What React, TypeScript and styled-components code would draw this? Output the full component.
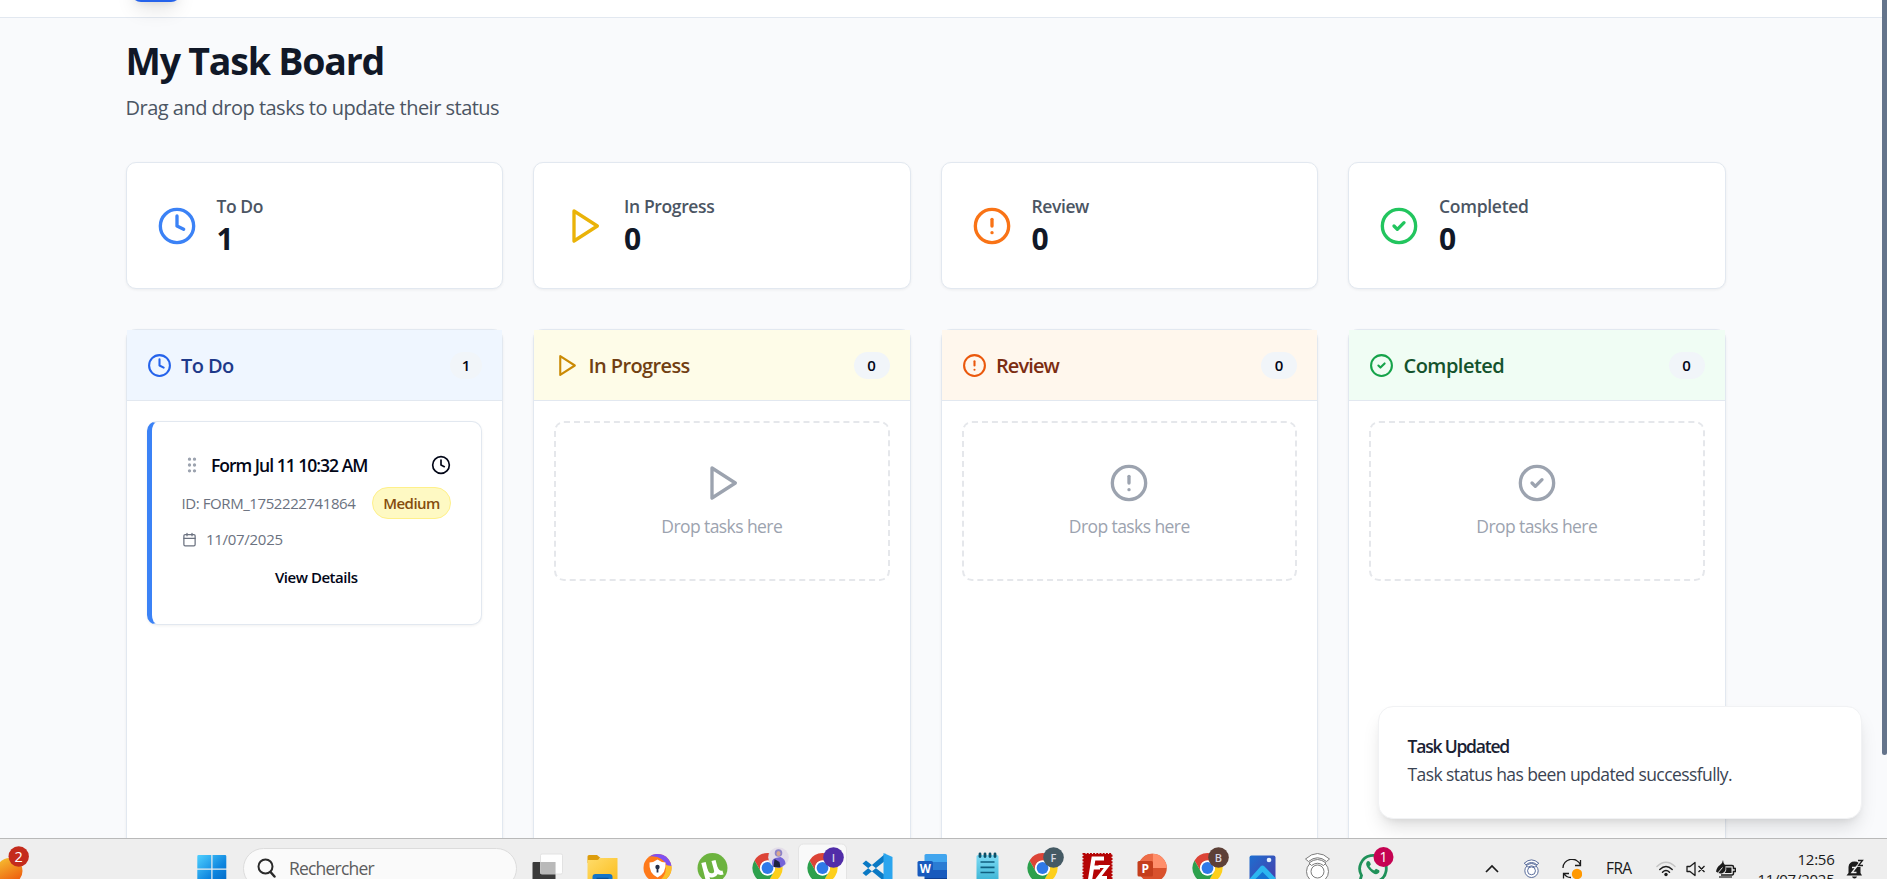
import React from "react";
import styled, { createGlobalStyle } from "styled-components";

const GlobalStyle = createGlobalStyle`
  *, *::before, *::after { box-sizing: border-box; }
  body { margin: 0; overflow: hidden; font-family: "Open Sans", "Noto Sans", sans-serif; color: #020617; }
  h1, h2, h3, p { margin: 0; }
  svg { display: block; flex: none; }
`;

/* ---------- page ---------- */

const Screen = styled.div`
  position: relative;
  display: flex;
  flex-direction: column;
  height: 879px;
  overflow: hidden;
  background: #f9fafc;
`;

const Viewport = styled.div`
  position: relative;
  flex: 0 0 838px;
  overflow: hidden;
`;

const TopBar = styled.header`
  position: relative;
  z-index: 1;
  display: flex;
  align-items: flex-end;
  height: 18px;
  padding: 0 0 15px 130.5px;
  background: #fff;
  border-bottom: 1px solid #e2e8f0;
`;

const LogoTile = styled.div`
  width: 50px;
  height: 50px;
  border-radius: 10px;
  background: #2563eb;
  box-shadow: 0 12px 19px -4px rgba(0, 0, 0, 0.1), 0 5px 8px -5px rgba(0, 0, 0, 0.1);
`;

const ScrollThumb = styled.div`
  position: absolute;
  z-index: 2;
  top: 0;
  right: 0;
  width: 5px;
  height: 755px;
  background: #64748b;
  border-radius: 0 0 3px 3px;
`;

const Main = styled.main`
  width: 1600px;
  margin-left: 125.5px;
  padding-top: 20px;
`;

const PageTitle = styled.h1`
  font-size: 37.5px;
  line-height: 46px;
  font-weight: 700;
  letter-spacing: -1.2px;
  color: #111827;
`;

const Subtitle = styled.p`
  margin: 9px 0 39px 0;
  font-size: 20px;
  line-height: 30px;
  letter-spacing: -0.51px;
  color: #4b5563;
`;

const FourColumns = styled.div`
  display: grid;
  grid-template-columns: repeat(4, 1fr);
  gap: 30px;
`;

/* ---------- stat cards ---------- */

const StatCard = styled.section`
  display: flex;
  align-items: center;
  gap: 20px;
  height: 127px;
  margin-bottom: 40px;
  padding: 0 30px;
  background: #fff;
  border: 1px solid #e2e8f0;
  border-radius: 10px;
  box-shadow: 0 1px 3px rgba(0, 0, 0, 0.06);
`;

const StatText = styled.div`
  padding-top: 2px;
`;

const StatLabel = styled.p<{ $track: number }>`
  font-size: 17.5px;
  line-height: 25px;
  font-weight: 550;
  letter-spacing: ${(p) => p.$track}px;
  color: #4b5563;
`;

const StatValue = styled.p`
  font-size: 30px;
  line-height: 40px;
  font-weight: 700;
  color: #111827;
`;

/* ---------- board columns ---------- */

const Column = styled.section`
  height: 700px;
  background: #fff;
  border: 1px solid #e2e8f0;
  border-radius: 10px;
  box-shadow: 0 1px 3px rgba(0, 0, 0, 0.06);
`;

const ColumnHeader = styled.header<{ $tint: string }>`
  display: flex;
  align-items: center;
  gap: 9.5px;
  height: 71px;
  padding: 0 20px;
  background: ${(p) => p.$tint};
  border-bottom: 1px solid #e2e8f0;
`;

const ColumnTitle = styled.h2<{ $color: string; $track: number }>`
  flex: 1;
  padding-top: 2px;
  font-size: 20px;
  line-height: 30px;
  font-weight: 600;
  letter-spacing: ${(p) => p.$track}px;
  color: ${(p) => p.$color};
`;

const CountBadge = styled.span<{ $narrow: boolean }>`
  width: ${(p) => (p.$narrow ? 32 : 36)}px;
  height: 27px;
  border-radius: 14px;
  background: #f1f5f9;
  font-size: 15px;
  line-height: 27px;
  font-weight: 550;
  text-align: center;
`;

const ColumnBody = styled.div`
  padding: 20px;
`;

const DropZone = styled.div`
  display: flex;
  flex-direction: column;
  align-items: center;
  justify-content: center;
  gap: 11px;
  height: 160px;
  border: 2px dashed #e5e7eb;
  border-radius: 10px;
  color: #9ca3af;
  font-size: 17.5px;
  line-height: 25px;
  letter-spacing: -0.58px;
`;

/* ---------- task card ---------- */

const TaskCard = styled.article`
  display: flex;
  flex-direction: column;
  height: 204px;
  padding: 30px 30px 29px;
  background: #fff;
  border: 1px solid #e2e8f0;
  border-left: 5px solid #3b82f6;
  border-radius: 10px;
  box-shadow: 0 1px 3px rgba(0, 0, 0, 0.06);
`;

const TaskHead = styled.div`
  display: flex;
  align-items: center;
  height: 26px;
`;

const TaskTitle = styled.h3`
  flex: 1;
  margin-left: 9.5px;
  font-size: 17.5px;
  line-height: 26px;
  font-weight: 600;
  letter-spacing: -0.99px;
  white-space: nowrap;
`;

const TaskMeta = styled.div`
  display: flex;
  align-items: center;
  justify-content: space-between;
  height: 32px;
  margin-top: 9px;
  font-size: 15px;
  letter-spacing: -0.42px;
  white-space: nowrap;
  color: #6b7280;
`;

const Priority = styled.span`
  width: 79px;
  height: 32px;
  border: 1px solid #fef08a;
  border-radius: 16px;
  background: #fef9c3;
  color: #854d0e;
  font-weight: 600;
  line-height: 30px;
  text-align: center;
  letter-spacing: -0.56px;
`;

const TaskDate = styled.div`
  display: flex;
  align-items: center;
  gap: 9.5px;
  height: 20px;
  margin-top: 10px;
  font-size: 15px;
  letter-spacing: -0.29px;
  color: #6b7280;
`;

const DetailsButton = styled.button`
  height: 35px;
  margin-top: auto;
  padding: 0;
  border: 0;
  background: transparent;
  font: 600 15px/35px "Open Sans", "Noto Sans", sans-serif;
  letter-spacing: -0.48px;
  color: #020617;
`;

/* ---------- toast ---------- */

const Toast = styled.aside`
  position: absolute;
  z-index: 1;
  right: 25.500px;
  bottom: 19px;
  display: flex;
  flex-direction: column;
  justify-content: center;
  width: 484px;
  height: 113px;
  padding: 0 29px;
  background: #fff;
  border: 1px solid #f1f2f4;
  border-radius: 15px;
  box-shadow: 0 12px 19px -4px rgba(0, 0, 0, 0.13), 0 5px 8px -5px rgba(0, 0, 0, 0.1);
`;

const ToastTitle = styled.p`
  font-size: 17.5px;
  line-height: 28px;
  font-weight: 600;
  letter-spacing: -1.2px;
  color: #1a2233;
`;

const ToastText = styled.p`
  margin-bottom: 6px;
  font-size: 17.5px;
  line-height: 28px;
  letter-spacing: -0.58px;
  color: #3b4453;
`;

/* ---------- taskbar ---------- */

const Taskbar = styled.footer`
  flex: none;
  display: flex;
  align-items: center;
  height: 60px;
  background: #eee;
  border-top: 1px solid #b9b9b9;
  color: #1b1b1b;
`;

const StartButton = styled.div`
  margin-left: 166.5px;
`;

const SearchBox = styled.div`
  display: flex;
  align-items: center;
  gap: 13px;
  width: 274px;
  height: 41px;
  margin: 0 3px 0 16.5px;
  padding: 0 0 1px 13px;
  border: 1px solid #dcdcdc;
  border-radius: 21px;
  background: #fafafa;
  color: #5d5d5d;
  font-size: 17.5px;
  letter-spacing: -0.8px;
`;

const Tray = styled.div`
  display: flex;
  align-items: center;
  margin-left: 84.5px;
`;

const TrayItem = styled.div<{ $before: number }>`
  margin-left: ${(p) => p.$before}px;
`;

const Language = styled.span`
  width: 27px;
  margin: 0 0 2px 24.5px;
  font-size: 15.5px;
  letter-spacing: -0.6px;
`;

const Clock = styled.div`
  width: 98.5px;
  font-size: 15px;
  line-height: 20px;
  text-align: right;
  letter-spacing: -0.25px;
`;

/* ---------- line icons ---------- */

type IconName = "clock" | "play" | "alert" | "check" | "grip" | "calendar";

const shapes: Record<IconName, React.ReactNode> = {
  clock: (
    <>
      <circle cx="12" cy="12" r="10" />
      <polyline points="12 6 12 12 16 14" />
    </>
  ),
  play: <polygon points="6 3 20 12 6 21 6 3" />,
  alert: (
    <>
      <circle cx="12" cy="12" r="10" />
      <line x1="12" x2="12" y1="8" y2="12" />
      <line x1="12" x2="12.01" y1="16" y2="16" />
    </>
  ),
  check: (
    <>
      <circle cx="12" cy="12" r="10" />
      <path d="m9 12 2 2 4-4" />
    </>
  ),
  grip: (
    <>
      {[9, 15].map((x) => [5, 12, 19].map((y) => <circle key={`${x}-${y}`} cx={x} cy={y} r="1" />))}
    </>
  ),
  calendar: (
    <>
      <path d="M8 2v4M16 2v4M3 10h18" />
      <rect width="18" height="18" x="3" y="4" rx="2" />
    </>
  ),
};

const LineIcon = ({ name, size, color = "currentColor" }: { name: IconName; size: number; color?: string }) => (
  <svg width={size} height={size} viewBox="0 0 24 24" fill="none" stroke={color} strokeWidth="2" strokeLinecap="round" strokeLinejoin="round">
    {shapes[name]}
  </svg>
);

/* ---------- taskbar drawings ---------- */

const AppSlot = ({ children }: { children: React.ReactNode }) => (
  <svg width="55" height="59" viewBox="-27.5 -29 55 59">
    {children}
  </svg>
);

const SmallText = styled.text`
  font-family: "Open Sans", sans-serif;
  text-anchor: middle;
`;

const TaskViewApp = () => (
  <AppSlot>
    <rect x="-15" y="-6" width="23" height="24" rx="1" fill="#3a3a3a" />
    <rect x="-7" y="-14" width="22" height="20" rx="1.5" fill="#fff" fillOpacity=".9" stroke="#ddd" strokeWidth=".8" />
    <path d="M-7-6H8V6H-7Z" fill="#b9b9b9" />
  </AppSlot>
);

const FolderApp = () => (
  <AppSlot>
    <path d="M-15-11.5q0-1.500 1.500-1.500h8l3.500 3H-3v5h-12z" fill="#dd9d0c" />
    <path d="M-15-8H-5l3-2H15V15H-15Z" fill="url(#folder)" />
    <path d="M-10 15V9q0-3 3-3H7q3 0 3 3v6z" fill="#1374c8" />
    <path d="M-6 10.500H6" stroke="#0a4f93" strokeWidth="1.500" />
  </AppSlot>
);

const ShieldBrowserApp = () => (
  <AppSlot>
    <circle r="14" fill="#ff7a1a" />
    <path d="M-8-11.500Q5-13 11 0L13.900-2A14 14 0 0 0-8-11.500Z" fill="#8050f2" />
    <path d="M13.900-2A14 14 0 0 1-1 14Q10 9 8-3Z" fill="#fbc02a" />
    <path d="M-8-5.500Q-3-6 0-8.500 3-6 8-5.500 9 5 0 9.500-9 5-8-5.500Z" fill="#fff" />
    <circle cy="-1" r="2.200" fill="#25304a" />
    <path d="M-.9 0H.9V4.500H-.9Z" fill="#25304a" />
  </AppSlot>
);

const TorrentApp = () => (
  <AppSlot>
    <circle r="15" fill="#6cb33f" />
    <path d="M-9-5.500-3.500 16" stroke="#fff" strokeWidth="4.500" fill="none" />
    <path d="M-6.800 2Q-5 8.500.5 7.200 5 6 3.200.5L1-7.500M3.200 0Q5.500 6 10.500 4.500" stroke="#fff" strokeWidth="4.200" fill="none" />
  </AppSlot>
);

const ChromeApp = ({ badge, color, active }: { badge?: string; color: string; active?: boolean }) => (
  <AppSlot>
    {active && <rect x="-24" y="-24" width="48" height="52" rx="5" fill="#f9f9f9" stroke="#e4e4e4" />}
    {["#dc4437", "#fdcf1c", "#2ca04c"].map((fill, i) => (
      <path key={fill} transform={`rotate(${i * 120})`} fill={fill} d="M-13-7.500A15 15 0 0 1 13-7.500H0A7.500 7.500 0 0 0-6.500 3.750Z" />
    ))}
    <circle r="7.500" fill="#fff" />
    <circle r="5.900" fill="#2f79e8" />
    <circle cx="11" cy="-10.500" r="10.300" fill={color} />
    {badge ? (
      <SmallText x="11" y="-6.500" fontSize="11" fontWeight="600" fill="#d8d8e2">{badge}</SmallText>
    ) : (
      <>
        <path d="M5-2Q3-9 8-10L13-11Q18-9 18-4 15-.5 11-.2 7-.3 5-2Z" fill="#7464d8" />
        <path d="M6-1 7-9 12-6 13-.5Z" fill="#1d2240" />
        <circle cx="11" cy="-15" r="3.800" fill="#8d83c8" />
        <ellipse cx="11" cy="-14.500" rx="2" ry="2.500" fill="#d9a88f" />
      </>
    )}
  </AppSlot>
);

const CodeApp = () => (
  <AppSlot>
    <path d="M-15-4.500-11.500-7.500 8 7.500V14.500Z M-15 5-11.500 8 8-7.500V-14.500Z" fill="#0a79c4" />
    <path d="M6-15 15-11V11L6 15Z" fill="#2ba5ee" />
  </AppSlot>
);

const WordApp = () => (
  <AppSlot>
    <path d="M-8-12.500Q-8-14-6.500-14H13q1.500 0 1.500 1.500V-6H-8Z" fill="#41a5ee" />
    <path d="M-8-6H14.500V2H-8Z" fill="#2b7cd3" />
    <path d="M-8 2H14.500V10H-8Z" fill="#185abd" />
    <path d="M-8 10H14.500V15H-8Z" fill="#103f91" />
    <rect x="-15" y="-7" width="15.500" height="15.500" rx="1.500" fill="#185abd" />
    <SmallText x="-7.300" y="4.800" fontSize="11.500" fontWeight="700" fill="#fff">W</SmallText>
  </AppSlot>
);

const NotesApp = () => (
  <AppSlot>
    <rect x="-11" y="-13" width="22" height="30" rx="1.500" fill="url(#notes)" />
    {[-8, -3, 2, 7].map((x) => (
      <path key={x} d={`M${x + 0.500}-14v2.500`} stroke="#0d5068" strokeWidth="2.800" strokeLinecap="round" />
    ))}
    <path d="M-7-6H7M-7-.7H7M-7 4.500H7" stroke="#0f5f80" strokeWidth="1.700" />
  </AppSlot>
);

const FtpApp = () => (
  <AppSlot>
    <rect x="-14" y="-14" width="28" height="30" fill="#b50405" stroke="#b50405" strokeWidth="2" strokeDasharray="2 1.200" />
    <path d="M-7.500 12-4-9.500H6.500M-5.800-.5H2.500" stroke="#fff" strokeWidth="4.200" fill="none" />
    <path d="M1-1.500H9.500L1 9.500H9.500" stroke="#fff" strokeWidth="3.200" fill="none" />
  </AppSlot>
);

const SlidesApp = () => (
  <AppSlot>
    <circle r="14.300" fill="#d9512c" />
    <path d="M0-14.300A14.300 14.300 0 0 1 14.300 0H0Z" fill="#ff8f6b" />
    <path d="M0-14.300A14.300 14.300 0 0 0-14.300 0H0Z" fill="#ed6c47" />
    <rect x="-15" y="-7" width="15.500" height="15.500" rx="1.500" fill="#c43e1c" />
    <SmallText x="-7.300" y="4.800" fontSize="12" fontWeight="700" fill="#fff">P</SmallText>
  </AppSlot>
);

const PhotosApp = () => (
  <AppSlot>
    <rect x="-13" y="-12.500" width="26" height="30" rx="2" fill="url(#photos)" />
    <path d="M-13 11-2-1.500Q0-3.300 2-1.500L13 10V17H-13Z" fill="#2cb6f0" />
    <path d="M-13 17 0 4 13 17Z" fill="#1573d2" />
    <circle cx="6.500" cy="-8" r="2.300" fill="#e6f2ff" />
  </AppSlot>
);

const Beacon = ({ stroke, weight = 1 }: { stroke: string; weight?: number }) => (
  <g fill="#fff" stroke={stroke} strokeWidth={weight}>
    <circle cy="3.500" r="11" />
    <path d="M-12-9Q0-20 12-9L9-6.500Q0-14 -9-6.500Z" />
    <path d="M-8.500-5Q0-12 8.500-5L6-2.500Q0-7-6-2.500Z" />
    <circle cy="3.500" r="6.500" />
  </g>
);

const MessengerApp = () => (
  <AppSlot>
    <path d="M-13 14.500-11 7.500A13.300 13.300 0 1 1-6 12.400Z" fill="none" stroke="#1f9159" strokeWidth="2.800" />
    <path d="M-5.500-6.500q2-1.500 3.300 1.200l.5 1.700-1.300 1.800q1.800 3 4.700 4.200l1.800-1.700 3.200 1.600q1 2-1.700 3.500Q2 7.500-3.500 1.500-8-3.500-5.500-6.500Z" fill="#1f9159" />
    <circle cx="11" cy="-11" r="10" fill="#c50352" />
    <SmallText x="11" y="-6" fontSize="14" fill="#fff">1</SmallText>
  </AppSlot>
);

const WeatherWidget = () => (
  <svg width="30" height="59" viewBox="0 -29 30 59">
    <circle cx="9.500" cy="3" r="13" fill="url(#sun)" />
    <circle cx="18.700" cy="-11.500" r="10.200" fill="#c42b1c" />
    <SmallText x="18.700" y="-6" fontSize="14.500" fill="#fff">2</SmallText>
  </svg>
);

const WindowsLogo = () => (
  <svg width="30" height="30" viewBox="0 0 30 30">
    <path d="M1.500 1H14.300V14.600H.3V2.200Q.3 1 1.500 1ZM15.500 1H28Q29.300 1 29.300 2.200V14.600H15.500ZM.3 15.800H14.300V29.500H.3ZM15.500 15.800H29.300V29.500H15.500Z" fill="url(#win)" />
  </svg>
);

const Gradients = () => (
  <svg width="0" height="0">
    <defs>
      <linearGradient id="win" x1="0" y1="0" x2="1" y2="1">
        <stop offset="0" stopColor="#4fd0ff" />
        <stop offset=".6" stopColor="#0e86df" />
        <stop offset="1" stopColor="#0067c5" />
      </linearGradient>
      <linearGradient id="sun" x1="0" y1="0" x2=".5" y2="1">
        <stop offset="0" stopColor="#f6c534" />
        <stop offset="1" stopColor="#ee5f0e" />
      </linearGradient>
      <linearGradient id="folder" x1="0" y1="0" x2="1" y2="1">
        <stop offset="0" stopColor="#ffdc6b" />
        <stop offset="1" stopColor="#fbbd1c" />
      </linearGradient>
      <linearGradient id="notes" x1="0" y1="0" x2="0" y2="1">
        <stop offset="0" stopColor="#7fdcf5" />
        <stop offset="1" stopColor="#32aed0" />
      </linearGradient>
      <linearGradient id="photos" x1="0" y1="0" x2="1" y2="1">
        <stop offset="0" stopColor="#1e6fd0" />
        <stop offset="1" stopColor="#4b3aa8" />
      </linearGradient>
    </defs>
  </svg>
);

/* ---------- data ---------- */

interface Status {
  title: string;
  count: number;
  icon: IconName;
  accent: string;
  strong: string;
  tint: string;
  ink: string;
  labelTrack: number;
  titleTrack: number;
}

const statuses: Status[] = [
  { title: "To Do", count: 1, icon: "clock", accent: "#3b82f6", strong: "#2563eb", tint: "#eff6ff", ink: "#1e3a8a", labelTrack: -0.45, titleTrack: -0.6 },
  { title: "In Progress", count: 0, icon: "play", accent: "#eab308", strong: "#ca8a04", tint: "#fefce8", ink: "#713f12", labelTrack: -0.36, titleTrack: -0.6 },
  { title: "Review", count: 0, icon: "alert", accent: "#f97316", strong: "#ea580c", tint: "#fff7ed", ink: "#7c2d12", labelTrack: -0.4, titleTrack: -0.9 },
  { title: "Completed", count: 0, icon: "check", accent: "#22c55e", strong: "#16a34a", tint: "#f0fdf4", ink: "#14532d", labelTrack: -0.28, titleTrack: -0.52 },
];

export default function App() {
  return (
    <Screen>
      <GlobalStyle />
      <Viewport>
        <TopBar>
          <LogoTile />
        </TopBar>
        <Main>
          <PageTitle>My Task Board</PageTitle>
          <Subtitle>Drag and drop tasks to update their status</Subtitle>
          <FourColumns>
            {statuses.map((s) => (
              <StatCard key={s.title}>
                <LineIcon name={s.icon} size={40} color={s.accent} />
                <StatText>
                  <StatLabel $track={s.labelTrack}>{s.title}</StatLabel>
                  <StatValue>{s.count}</StatValue>
                </StatText>
              </StatCard>
            ))}
          </FourColumns>
          <FourColumns>
            {statuses.map((s) => (
              <Column key={s.title}>
                <ColumnHeader $tint={s.tint}>
                  <LineIcon name={s.icon} size={25} color={s.strong} />
                  <ColumnTitle $color={s.ink} $track={s.titleTrack}>{s.title}</ColumnTitle>
                  <CountBadge $narrow={s.count === 1}>{s.count}</CountBadge>
                </ColumnHeader>
                <ColumnBody>
                  {s.count > 0 ? (
                    <TaskCard>
                      <TaskHead>
                        <LineIcon name="grip" size={20} color="#9ca3af" />
                        <TaskTitle>Form Jul 11 10:32 AM</TaskTitle>
                        <LineIcon name="clock" size={20} />
                      </TaskHead>
                      <TaskMeta>
                        <span>ID: FORM_1752222741864</span>
                        <Priority>Medium</Priority>
                      </TaskMeta>
                      <TaskDate>
                        <LineIcon name="calendar" size={15} />
                        <span>11/07/2025</span>
                      </TaskDate>
                      <DetailsButton>View Details</DetailsButton>
                    </TaskCard>
                  ) : (
                    <DropZone>
                      <LineIcon name={s.icon} size={40} />
                      <span>Drop tasks here</span>
                    </DropZone>
                  )}
                </ColumnBody>
              </Column>
            ))}
          </FourColumns>
        </Main>
        <Toast>
          <ToastTitle>Task Updated</ToastTitle>
          <ToastText>Task status has been updated successfully.</ToastText>
        </Toast>
        <ScrollThumb />
      </Viewport>

      <Taskbar>
        <WeatherWidget />
        <StartButton>
          <WindowsLogo />
        </StartButton>
        <SearchBox>
          <svg width="19" height="20" viewBox="0 0 19 20" fill="none" stroke="#2a2a2a" strokeWidth="2" strokeLinecap="round">
            <circle cx="8.500" cy="8.500" r="7" />
            <path d="m13.500 14 4 4.500" strokeWidth="2.500" />
          </svg>
          <span>Rechercher</span>
        </SearchBox>
        <TaskViewApp />
        <FolderApp />
        <ShieldBrowserApp />
        <TorrentApp />
        <ChromeApp color="#e3dde8" />
        <ChromeApp badge="I" color="#512da8" active />
        <CodeApp />
        <WordApp />
        <NotesApp />
        <ChromeApp badge="F" color="#455a64" />
        <FtpApp />
        <SlidesApp />
        <ChromeApp badge="B" color="#5d4037" />
        <PhotosApp />
        <AppSlot>
          <Beacon stroke="#7c7c7c" />
        </AppSlot>
        <MessengerApp />
        <Tray>
          <svg width="14" height="14" viewBox="0 0 14 14" fill="none" stroke="#1b1b1b" strokeWidth="1.700">
            <path d="M1 10 7 4l6 6" />
          </svg>
          <TrayItem $before={24}>
            <svg width="17" height="20" viewBox="-14 -15 28 31">
              <Beacon stroke="#4a5f92" weight={1.5} />
            </svg>
          </TrayItem>
          <TrayItem $before={22}>
            <svg width="20" height="20" viewBox="0 0 20 20" fill="none" stroke="#1b1b1b" strokeWidth="1.300">
              <path d="M1 9A9 8.500 0 0 1 18.500 6M18.500 1v5.500h-5.500M9 18.500Q4 18.500 2 14.500M1.500 19.500v-5h5.500" />
              <circle cx="15" cy="15" r="5.200" fill="#ff9800" stroke="none" />
            </svg>
          </TrayItem>
          <Language>FRA</Language>
          <TrayItem $before={23}>
            <svg width="20" height="16" viewBox="0 0 20 16" fill="none" strokeWidth="1.500" strokeLinecap="round">
              <path d="M1 5.500Q10-3 19 5.500" stroke="#c4c4c4" />
              <path d="M3.800 8.500Q10 2.500 16.200 8.500M6.500 11.200Q10 7.800 13.500 11.200" stroke="#1b1b1b" />
              <circle cx="10" cy="13.500" r="1.700" fill="#1b1b1b" />
            </svg>
          </TrayItem>
          <TrayItem $before={10}>
            <svg width="20" height="16" viewBox="0 0 20 16" fill="none" stroke="#1b1b1b" strokeWidth="1.300" strokeLinejoin="round">
              <path d="M1 5.500H4L9 1.500V14.500L4 10.500H1ZM12.500 5l6 6M18.500 5l-6 6" />
            </svg>
          </TrayItem>
          <TrayItem $before={10}>
            <svg width="20" height="18" viewBox="0 0 20 18">
              <path d="M9 5.500H16Q17.500 5.500 17.500 7V8.500H19.500V11.500H17.500V13Q17.500 15 16 15H5" fill="none" stroke="#1b1b1b" strokeWidth="1.500" />
              <path d="M10 7.500H15.500V13H8.500Q11 10.500 10 7.500Z" fill="#1b1b1b" />
              <path d="M7 0Q7 2.500 9 5 11 10 7 13 3 14.500 0 11.500 1 6.500 4 5 6.500 3.500 7 0Z" fill="#1b1b1b" />
              <path d="M1 14 6.500 7.500" stroke="#eee" strokeWidth="1" />
              <path d="M3 17H16" stroke="#1b1b1b" strokeWidth="1.200" />
            </svg>
          </TrayItem>
          <Clock>
            <div>12:56</div>
            <div>11/07/2025</div>
          </Clock>
          <TrayItem $before={11}>
            <svg width="18" height="20" viewBox="0 0 18 20">
              <path d="M2.500 14V8Q3 2.500 8.500 2.500 14 2.500 14.500 8V14L16 16.500H.5Z" fill="#1b1b1b" />
              <path d="M6 17.500H11Q10.500 19.500 8.500 19.500T6 17.500Z" fill="#1b1b1b" />
              <path d="M6 8.500H10L6 13.500H10.500" fill="none" stroke="#eee" strokeWidth="1.400" />
              <path d="M12 1.500H16.500L12.500 6.500H17" fill="none" stroke="#eee" strokeWidth="3" />
              <path d="M12 1.500H16.500L12.500 6.500H17" fill="none" stroke="#1b1b1b" strokeWidth="1.300" />
            </svg>
          </TrayItem>
        </Tray>
      </Taskbar>
      <Gradients />
    </Screen>
  );
}
